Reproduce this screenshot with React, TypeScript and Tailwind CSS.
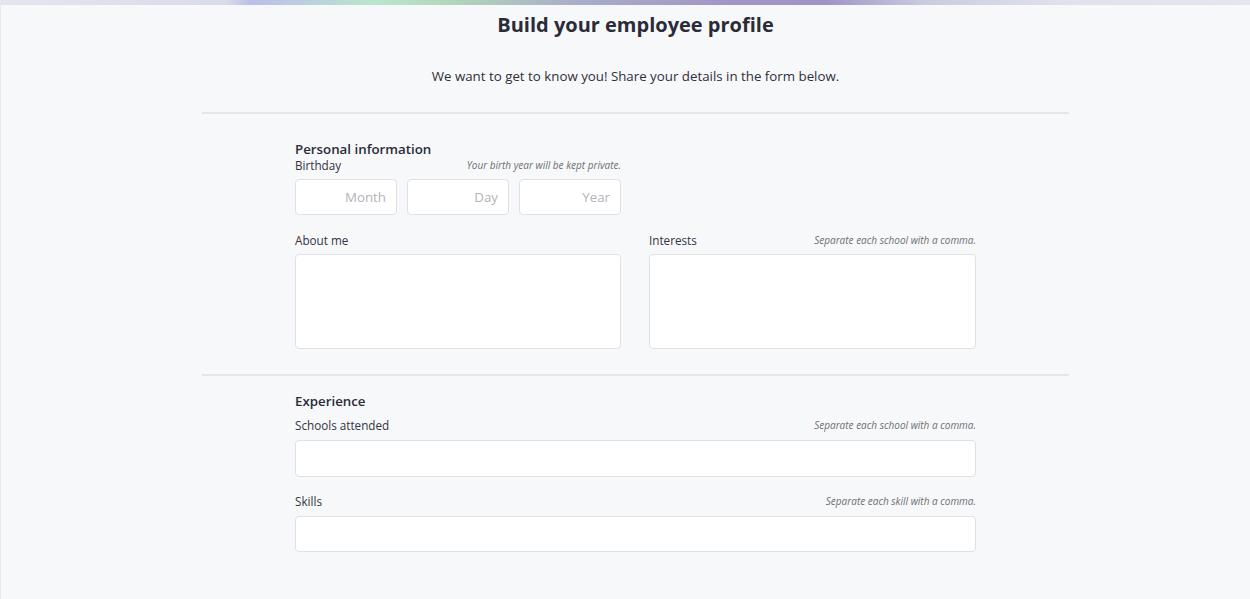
import React from "react";

const font = { fontFamily: '"Open Sans", "Noto Sans", sans-serif' };

function Label({ text, hint }: { text: string; hint?: string }) {
  return (
    <div className="flex items-start justify-between h-[16px]">
      <span className="text-[11.7px] leading-[14px] text-[#34343f]">{text}</span>
      {hint && (
        <span className="text-[10px] leading-[14px] italic text-[#6f6f76]">{hint}</span>
      )}
    </div>
  );
}

export default function App() {
  return (
    <div style={font} className="min-h-[599px] w-[1250px] bg-[#f7f8fa] border-l border-[#e9eaee]">
      <div className="h-[5px] w-full bg-[linear-gradient(90deg,#e3e6ef_0%,#d9dce9_18%,#bdbee9_20%,#b9e6cf_30%,#b2d6bb_36%,#a9adc9_46%,#a296c6_58%,#9f94c7_66%,#c9cce0_74%,#dfe2ec_85%,#e4e6ee_100%)]" />
      <div className="ml-[201px] w-[867px]">
        <h1 className="mt-[6px] text-center text-[20px] leading-[28px] font-bold text-[#2b2b38]">
          Build your employee profile
        </h1>
        <p className="mt-[27px] text-center text-[13.3px] leading-[20px] text-[#2f2f3a]">
          We want to get to know you! Share your details in the form below.
        </p>
        <div className="mt-[26px] h-[2px] bg-[#e5e6e9]" />
        <div className="px-[93px] pt-[26px] pb-[25px]">
          <h2 className="text-[13.3px] leading-[18px] font-semibold text-[#2b2b38]">Personal information</h2>
          <div className="grid grid-cols-[326px_327px] gap-x-[28px]">
            <div>
              <Label text="Birthday" hint="Your birth year will be kept private." />
              <div className="mt-[5px] flex gap-[10px]">
                {["Month", "Day", "Year"].map((p) => (
                  <input
                    key={p}
                    placeholder={p}
                    className="h-[36px] w-[102px] rounded-[4px] border border-[#dfe1e6] bg-white px-[10px] text-right text-[13.3px] placeholder:text-[#b3b3b8] outline-none"
                  />
                ))}
              </div>
            </div>
            <div />
            <div className="mt-[18px]">
              <Label text="About me" />
              <textarea className="mt-[5px] block h-[95px] w-full resize-none rounded-[4px] border border-[#dfe1e6] bg-white outline-none" />
            </div>
            <div className="mt-[18px]">
              <Label text="Interests" hint="Separate each school with a comma." />
              <textarea className="mt-[5px] block h-[95px] w-full resize-none rounded-[4px] border border-[#dfe1e6] bg-white outline-none" />
            </div>
          </div>
        </div>
        <div className="h-[2px] bg-[#e5e6e9]" />
        <div className="px-[93px] pt-[16px]">
          <h2 className="text-[13.3px] leading-[18px] font-semibold text-[#2b2b38]">Experience</h2>
          <div className="mt-[8px]">
            <Label text="Schools attended" hint="Separate each school with a comma." />
            <input className="mt-[6px] block h-[37px] w-full rounded-[4px] border border-[#dfe1e6] bg-white outline-none" />
          </div>
          <div className="mt-[17px]">
            <Label text="Skills" hint="Separate each skill with a comma." />
            <input className="mt-[6px] block h-[36px] w-full rounded-[4px] border border-[#dfe1e6] bg-white outline-none" />
          </div>
        </div>
      </div>
    </div>
  );
}
